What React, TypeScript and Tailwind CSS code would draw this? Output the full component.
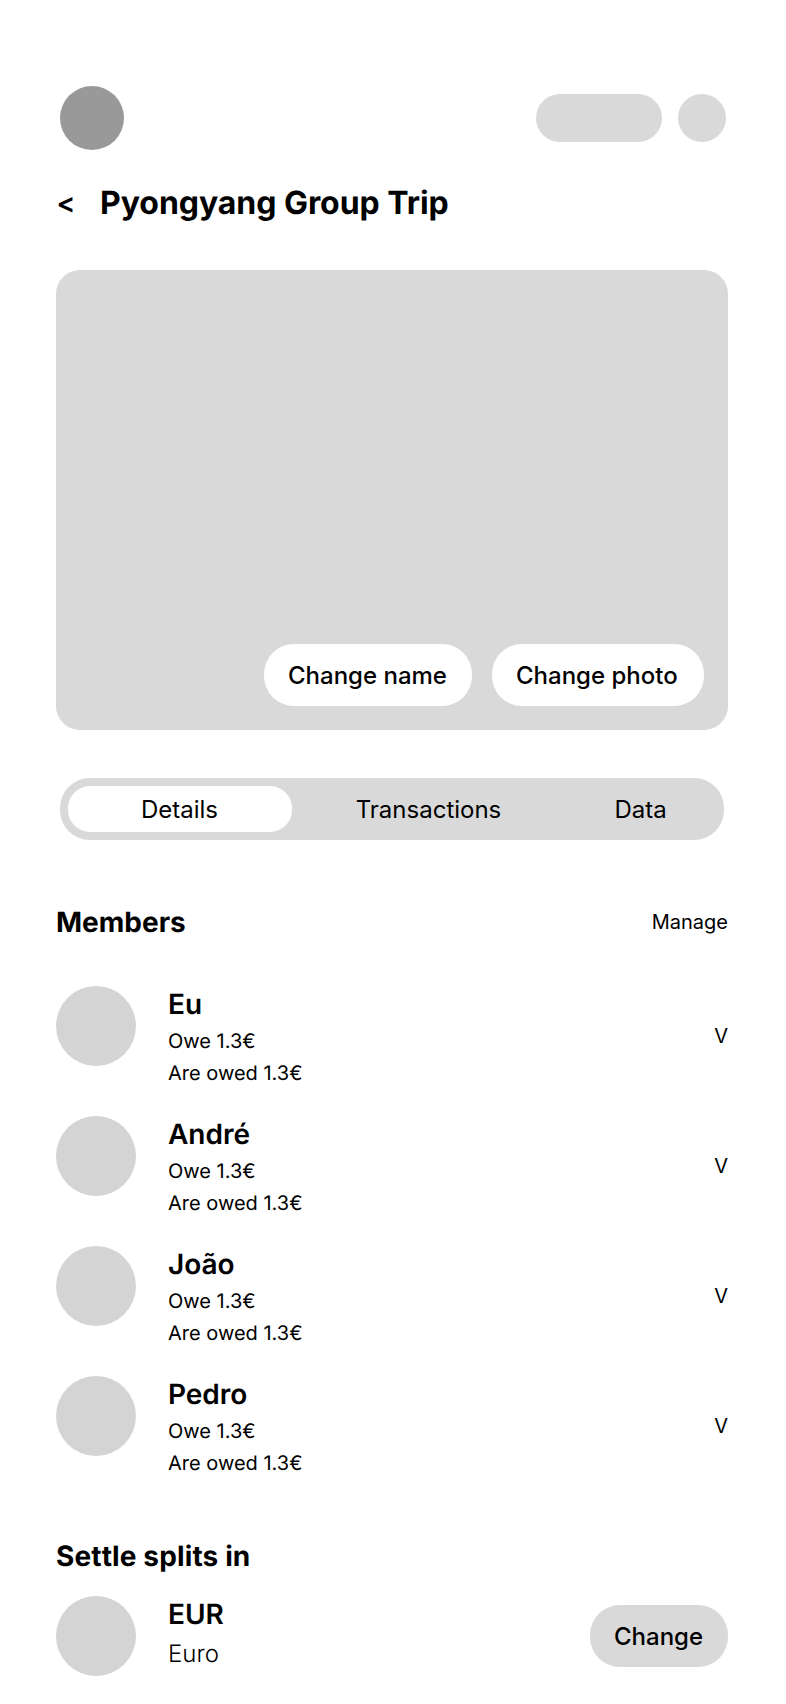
const members = ["Eu", "André", "João", "Pedro"];

function Avatar() {
  return <div className="size-20 shrink-0 rounded-full bg-[#d4d4d4]" />;
}

function MemberRow({ name }: { name: string }) {
  return (
    <li className="flex h-[98px]">
      <Avatar />
      <div className="ml-8 flex flex-1 flex-col gap-2 pt-px">
        <h3 className="text-[28px] leading-[34px] font-semibold tracking-[-0.02px]">{name}</h3>
        <p className="text-[20px] leading-6">Owe 1.3€</p>
        <p className="text-[20px] leading-6">Are owed 1.3€</p>
      </div>
      <button className="self-center pt-[2px] text-[20px] leading-6">V</button>
    </li>
  );
}

export default function App() {
  return (
    <main className="flex h-[1704px] w-[786px] flex-col overflow-hidden bg-white pt-[86px] pr-[58px] pl-14 font-['Inter',sans-serif] text-black antialiased [text-rendering:geometricPrecision]">
      <header className="flex h-16 items-center pr-[2px] pl-1">
        <div className="size-16 rounded-full bg-[#999999]" />
        <div className="ml-auto h-12 w-[126px] rounded-full bg-[#d9d9d9]" />
        <div className="ml-4 size-12 rounded-full bg-[#d9d9d9]" />
      </header>

      <div className="mt-[33px] flex h-[39px] items-center">
        <button className="w-[44px] pl-[0.5px] text-left text-[28px] leading-[34px] font-semibold">&lt;</button>
        <h1 className="text-[32px] leading-[39px] font-bold tracking-[-0.05px]">Pyongyang Group Trip</h1>
      </div>

      <section className="mt-12 flex h-[460px] w-[672px] shrink-0 items-end justify-end gap-5 rounded-3xl bg-[#d9d9d9] p-6">
        <button className="h-[62px] w-[208px] rounded-[30px] bg-white pl-6 text-left text-[24px] leading-[29px] font-medium">
          Change name
        </button>
        <button className="h-[62px] w-[212px] rounded-[30px] bg-white pl-6 text-left text-[24px] leading-[29px] font-medium">
          Change photo
        </button>
      </section>

      <nav className="mt-12 ml-1 flex h-[62px] w-[664px] rounded-[30px] bg-[#d9d9d9] p-2 text-[24px] leading-[29px]">
        <button className="w-[224px] rounded-[22px] bg-white pr-px">Details</button>
        <button className="w-[272px] pl-px">Transactions</button>
        <button className="w-[152px] pl-px">Data</button>
      </nav>

      <section className="mt-16 w-[672px]">
        <div className="flex h-[34px] items-center justify-between pt-[2px]">
          <h2 className="text-[28px] leading-[34px] font-bold">Members</h2>
          <button className="text-[20px] leading-6">Manage</button>
        </div>
        <ul className="mt-12 flex flex-col gap-8">
          {members.map((name) => (
            <MemberRow key={name} name={name} />
          ))}
        </ul>
      </section>

      <section className="mt-16 w-[672px]">
        <h2 className="h-[34px] pt-px text-[28px] leading-[34px] font-bold tracking-[0.13px]">
          Se<span className="[font-kerning:none]">tt</span>le splits in
        </h2>
        <div className="mt-6 flex h-20 items-center">
          <Avatar />
          <div className="ml-8 flex flex-1 flex-col gap-2 self-start pt-px">
            <h3 className="text-[28px] leading-[34px] font-semibold">EUR</h3>
            <p className="text-[24px] leading-[29px] font-light">Euro</p>
          </div>
          <button className="h-[62px] w-[138px] rounded-[30px] bg-[#d9d9d9] pl-6 text-left text-[24px] leading-[29px] font-medium">
            Change
          </button>
        </div>
      </section>
    </main>
  );
}
